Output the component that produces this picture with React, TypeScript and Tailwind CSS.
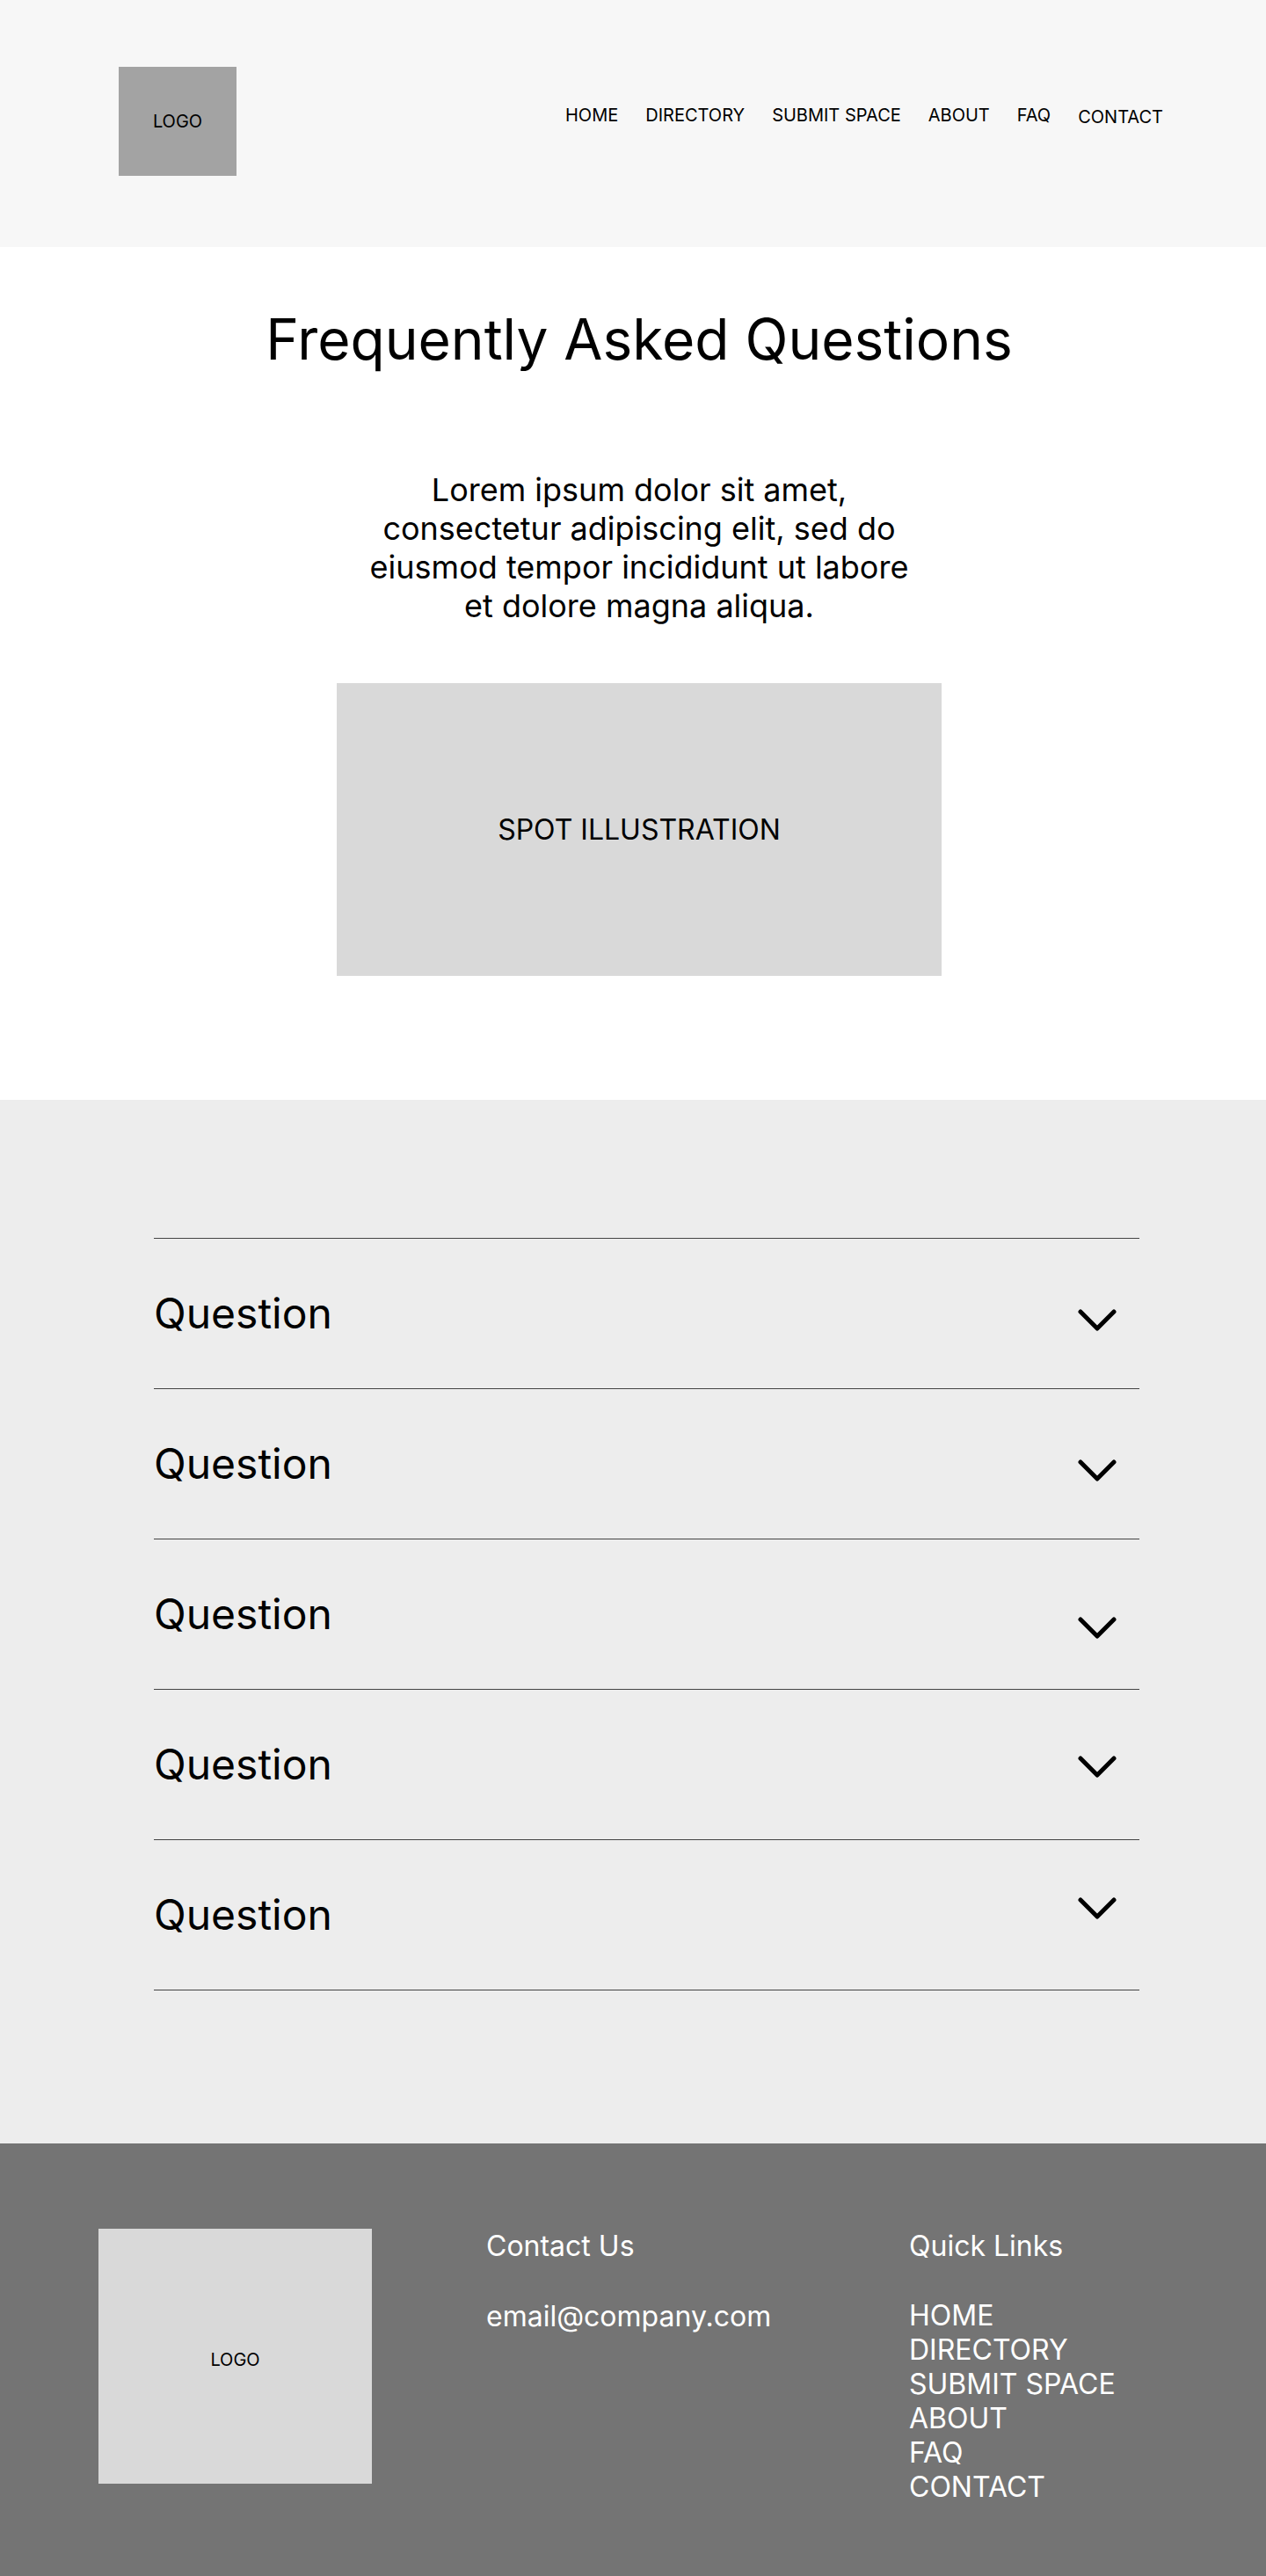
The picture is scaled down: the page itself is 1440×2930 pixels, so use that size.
const NAV = ["HOME", "DIRECTORY", "SUBMIT SPACE", "ABOUT", "FAQ", "CONTACT"]

// small vertical nudges on the chevrons, as in the mockup
const QUESTIONS = [
    { id: 1, nudge: "mt-[16px]" },
    { id: 2, nudge: "mt-[16px]" },
    { id: 3, nudge: "mt-[32px]" },
    { id: 4, nudge: "mt-[6px]" },
    { id: 5, nudge: "mb-[15px]" },
]

function Chevron() {
    return (
        <svg width="44" height="26" viewBox="0 0 44 26" fill="none">
            <path d="M3 3 L22 22 L41 3" stroke="black" strokeWidth="5" strokeLinecap="round" strokeLinejoin="round" />
        </svg>
    )
}

export default function App() {
    return (
        <main className="w-[1440px] font-['Inter',sans-serif] text-black">
            {/* Header */}
            <header className="h-[281px] bg-[#f7f7f7] flex items-start justify-between pl-[135px] pr-[117px] pt-[76px]">
                <div className="w-[134px] h-[124px] bg-[#a3a3a3] flex items-center justify-center text-[20px] leading-[24px]">
                    LOGO
                </div>
                <nav className="mt-[43px] flex items-start gap-[31px] text-[20px] leading-[24px]">
                    {NAV.map((item) => (
                        <a key={item} href="#" className={item === "CONTACT" ? "mt-[2px]" : ""}>
                            {item}
                        </a>
                    ))}
                </nav>
            </header>

            {/* Intro */}
            <section className="bg-white flex flex-col items-center pl-[14px] pt-[69px] pb-[141px]">
                <h1 className="text-[64px] leading-[72px] font-normal">Frequently Asked Questions</h1>
                <p className="mt-[113px] w-[640px] text-center text-[36px] leading-[44px]">
                    Lorem ipsum dolor sit amet, consectetur adipiscing elit, sed do eiusmod tempor incididunt ut labore et dolore magna aliqua.
                </p>
                <div className="mt-[66px] w-[688px] h-[333px] bg-[#d9d9d9] flex items-center justify-center text-[32px]">
                    SPOT ILLUSTRATION
                </div>
            </section>

            {/* FAQ list */}
            <section className="bg-[#ededed] pt-[157px] pb-[174px]">
                <div className="ml-[175px] w-[1121px] border-t border-[#444]">
                    {QUESTIONS.map((q) => (
                        <div key={q.id} className="h-[171px] border-b border-[#444] flex items-center justify-between">
                            <span className="text-[48px] leading-[58px]">Question</span>
                            <div className={`mr-[26px] ${q.nudge}`}>
                                <Chevron />
                            </div>
                        </div>
                    ))}
                </div>
            </section>

            {/* Footer */}
            <footer className="h-[492px] bg-[#747474] pt-[97px] pl-[112px] flex items-start text-white">
                <div className="w-[311px] h-[290px] bg-[#d9d9d9] pt-[8px] flex items-center justify-center text-[20px] text-black">
                    LOGO
                </div>
                <div className="ml-[130px] w-[481px] text-[32px] leading-[39px]">
                    <h3>Contact Us</h3>
                    <p className="mt-[41px]">email@company.com</p>
                </div>
                <div className="text-[32px] leading-[39px]">
                    <h3>Quick Links</h3>
                    <ul className="mt-[40px]">
                        {NAV.map((item) => (
                            <li key={item}>{item}</li>
                        ))}
                    </ul>
                </div>
            </footer>
        </main>
    )
}
